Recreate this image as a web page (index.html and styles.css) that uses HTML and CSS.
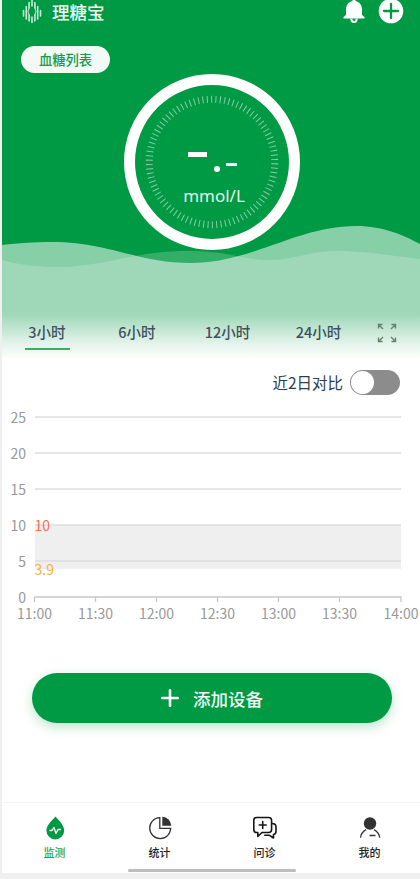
FILE: index.html
```html
<!DOCTYPE html>
<html lang="zh-CN">
<head>
<meta charset="utf-8">
<meta name="viewport" content="width=device-width, initial-scale=1">
<title>理糖宝</title>
<link rel="stylesheet" href="styles.css">
</head>
<body>
<div class="app">
  <section class="hero">
    <svg class="waves" viewBox="0 0 418 360" preserveAspectRatio="none" aria-hidden="true">
      <defs>
        <linearGradient id="fade" x1="0" y1="0" x2="0" y2="1">
          <stop offset="0" stop-color="#fff" stop-opacity="0"/>
          <stop offset=".3" stop-color="#fff" stop-opacity=".33"/>
          <stop offset=".65" stop-color="#fff" stop-opacity=".72"/>
          <stop offset="1" stop-color="#fff"/>
        </linearGradient>
      </defs>
      <path fill="#fff" fill-opacity=".53" d="M0 245C18 243 32 242 49 242C108 242 135 263 189 263C250 263 295 226 354 226C382 226 403 236 418 244V360H0Z"/>
      <path fill="#fff" fill-opacity=".2" d="M0 260C18 265 36 267 54 267C104 267 130 251 185 251C228 251 240 260 267 260C292 260 308 251 334 251C365 251 390 256 418 259V360H0Z"/>
      <path fill="url(#fade)" d="M0 314H418V360H0Z"/>
    </svg>
    <header class="topbar">
      <svg class="logo" viewBox="0 0 20 26" fill="none" stroke="#c9ebd7" stroke-width="1.6" stroke-linecap="round">
        <path d="M1.5 12.5V18M4.3 8.500V21M7.100 4.500V10M7.100 17V23M10 2V8M10 19V24.500M12.900 4.500V10M12.900 17V23M15.700 8.500V21M18.500 12.500V18"/>
        <path d="M7.100 10L6 13.500L7.100 17M12.900 10L14 13.500L12.900 17" stroke-width="1"/>
      </svg>
      <h1 class="brand">理糖宝</h1>
      <svg class="bell" viewBox="0 0 22 26" fill="#fff">
        <path d="M9.500 1H12.500V4C17 5 19 8.500 19 12.500V18L21.500 20V21.500H.5V20L3 18V12.500C3 8.500 5 5 9.500 4Z"/>
        <path d="M8.300 21.500C8.300 24 9.500 25 11 25S13.700 24 13.700 21.500" fill="none" stroke="#fff" stroke-width="2"/>
      </svg>
      <svg class="plus" viewBox="0 0 26 26"><circle cx="13" cy="13" r="12.300" fill="#fff"/><path d="M6 13H20M13 6V20" stroke="#009a44" stroke-width="2.300" stroke-linecap="round"/></svg>
    </header>
    <button class="list-btn">血糖列表</button>
    <div class="gauge">
      <svg class="ticks" viewBox="0 0 154 154" aria-hidden="true"><circle class="tick-ring" cx="77" cy="77" r="62.700" pathLength="900"/></svg>
      <div class="reading"><i class="dash-lg"></i><i class="dot"></i><i class="dash-sm"></i></div>
      <div class="unit">mmol/L</div>
    </div>
    <nav class="ranges">
      <a class="range active">3小时</a>
      <a class="range">6小时</a>
      <a class="range">12小时</a>
      <a class="range">24小时</a>
      <svg class="expand" viewBox="0 0 20 20" fill="none" stroke="#69806f" stroke-width="1.400">
        <path d="M1.500 5.500V1.500H5.500M1.500 1.500L6 6M14.500 1.500H18.500V5.500M18.500 1.500L14 6M1.500 14.500V18.500H5.500M1.500 18.500L6 14M14.500 18.500H18.500V14.500M18.500 18.500L14 14"/>
      </svg>
    </nav>
  </section>

  <div class="compare"><span>近2日对比</span><span class="switch"><i></i></span></div>

  <svg class="chart" viewBox="0 0 418 230">
    <path class="band" d="M33 125H399V169H33Z"/>
    <path class="grid" d="M33 17H399M33 53H399M33 89H399M33 125H399M33 161H399"/>
    <path class="axis" d="M32.500 197H399.500M32.500 197V202M93.500 197V202M154.500 197V202M215.500 197V202M276.500 197V202M337.500 197V202M399 197V202"/>
    <g class="y-labels">
      <text x="24" y="22.500">25</text><text x="24" y="58.500">20</text><text x="24" y="94.500">15</text>
      <text x="24" y="130.500">10</text><text x="24" y="166.500">5</text><text x="24" y="202.500">0</text>
    </g>
    <g class="x-labels">
      <text x="32.500" y="219">11:00</text><text x="93.500" y="219">11:30</text><text x="154.500" y="219">12:00</text>
      <text x="215.500" y="219">12:30</text><text x="276.500" y="219">13:00</text><text x="337.500" y="219">13:30</text><text x="399" y="219">14:00</text>
    </g>
    <text class="high" x="32.500" y="130.500">10</text>
    <text class="low" x="32.500" y="174.500">3.9</text>
  </svg>

  <button class="add-btn">
    <svg viewBox="0 0 18 18"><path d="M1.300 9H16.700M9 1.300V16.700" stroke="#fff" stroke-width="2.600" stroke-linecap="round"/></svg>
    <span>添加设备</span>
  </button>

  <nav class="tabs">
    <a class="tab on">
      <svg viewBox="0 0 24 24"><path fill="#009a44" d="M12.500 .5C15 3.500 21.200 9 21.200 14.500A8.900 8.900 0 0 1 3.400 14.500C3.400 9 10 3.500 12.500 .5Z"/><path d="M6.500 14.500H9L11 11.500L13 17.500L15 13.500H18" fill="none" stroke="#fff" stroke-width="1.300" stroke-linejoin="round"/></svg>
      <span>监测</span>
    </a>
    <a class="tab">
      <svg viewBox="0 0 24 24"><path d="M11.800 1.600A10.500 10.500 0 1 0 22.700 12.300H11.800Z" fill="none" stroke="#333" stroke-width="1.300"/><path fill="#333" d="M14.300 .8A9.500 9.500 0 0 1 23.300 9.800H14.300Z"/></svg>
      <span>统计</span>
    </a>
    <a class="tab">
      <svg viewBox="0 0 24 24" fill="none" stroke="#151515" stroke-width="1.600" stroke-linejoin="round" stroke-linecap="round"><path d="M3.600 1.500H15.600Q18.600 1.500 18.600 4.500V13.500Q18.600 16.500 15.600 16.500H9L4.800 20.500V16.500H3.600Q.8 16.500 .8 13.500V4.500Q.8 1.500 3.600 1.500ZM9.700 5.500V12.500M6.200 9H13.200"/><path d="M19 7.500Q23 7.500 23 11V15.500Q23 18 20.500 18.500V22L16.500 19.300H11.800"/></svg>
      <span>问诊</span>
    </a>
    <a class="tab">
      <svg viewBox="0 0 24 24"><circle cx="12" cy="7.500" r="6.200" fill="#333"/><path d="M2.500 21.800Q3 16.500 8 13.600M16 13.600Q21.200 16.500 21.700 21.800M11.500 19.500H17.500" fill="none" stroke="#333" stroke-width="1.300"/></svg>
      <span>我的</span>
    </a>
    <i class="home-bar"></i>
  </nav>
</div>
</body>
</html>
```

FILE: styles.css
```css
* { box-sizing: border-box; }

body {
  margin: 0;
  background: #f0f0f0;
  font-family: "Noto Sans CJK SC", "Noto Sans", sans-serif;
}

button {
  border: 0;
  padding: 0;
  font-family: inherit;
}

.app {
  display: flex;
  flex-direction: column;
  height: 873px;
  margin-left: 2px;
  background: #fff;
}

.hero {
  position: relative;
  display: flex;
  flex-direction: column;
  height: 360px;
  background: #009a44;
}

.waves {
  position: absolute;
  inset: 0;
  width: 100%;
  height: 100%;
}

.topbar {
  display: flex;
  align-items: center;
  height: 24px;
  padding: 0 16px 0 20px;
}

.logo { width: 20px; height: 26px; margin-top: -2px; }

.brand {
  flex: 1;
  margin: 0 0 0 10px;
  color: #eefaf2;
  font-size: 17.5px;
  font-weight: 500;
  line-height: 24px;
}

.bell { width: 22px; height: 26px; margin-top: -4px; }
.plus { width: 26px; height: 26px; margin: -2px 0 0 13px; }

.list-btn {
  width: 89px;
  height: 27px;
  margin: 22px 0 0 19px;
  border-radius: 14px;
  background: #f3faf6;
  color: #129c4f;
  font-size: 13.3px;
  font-weight: 500;
  line-height: 26px;
}

.gauge {
  position: relative;
  display: flex;
  flex-direction: column;
  align-items: center;
  flex: none;
  width: 176px;
  height: 176px;
  margin: 0.5px 0 0 122px;
  padding-top: 67px;
  border: 11px solid #fff;
  border-radius: 50%;
  background: #009a44;
}

.ticks {
  position: absolute;
  inset: 0;
  width: 154px;
  height: 154px;
}

.tick-ring {
  fill: none;
  stroke: #83cba2;
  stroke-width: 7;
  stroke-dasharray: 2.3 7.7;
  stroke-dashoffset: -3;
}

.reading {
  display: flex;
  align-items: flex-start;
  width: 49px;
  height: 20px;
}

.reading i { background: #fff; }
.dash-lg { width: 19px; height: 5px; }
.dot { width: 6px; height: 6px; margin: 14px 6px 0 7px; border-radius: 50%; }
.dash-sm { width: 11px; height: 3px; margin-top: 11px; }

.unit {
  margin: 12px 0 0 4px;
  color: #e3f5ea;
  font-family: "Noto Sans", sans-serif;
  font-size: 17px;
  line-height: 24px;
}

.ranges {
  position: relative;
  display: grid;
  grid-template-columns: 90px 90px 91px 91px 46px;
  margin-top: 68px;
}

.range {
  position: relative;
  color: #40505f;
  font-size: 14.5px;
  font-weight: 500;
  line-height: 28px;
  text-align: center;
}

.range.active::after {
  content: "";
  display: block;
  width: 45px;
  height: 2px;
  margin: 2px auto 0;
  background: #3bae65;
}

.expand { width: 20px; height: 20px; margin: 5px 0 0 13px; }

.compare {
  display: flex;
  align-items: center;
  justify-content: flex-end;
  gap: 7px;
  height: 44px;
  padding-right: 20px;
  color: #2c3e50;
  font-size: 15.5px;
}

.switch {
  width: 50px;
  height: 25px;
  padding: 1px;
  border-radius: 13px;
  background: #8c8c8c;
}

.switch i {
  display: block;
  width: 23px;
  height: 23px;
  border-radius: 50%;
  background: #fff;
}

.chart {
  flex: none;
  width: 418px;
  height: 230px;
  margin-top: -4px;
  font-size: 14px;
}

.band { fill: #efefef; }
.grid { stroke: #dedede; stroke-width: 1.5; }
.axis { fill: none; stroke: #c8c8c8; stroke-width: 1.3; }
.y-labels { fill: #999; text-anchor: end; }
.x-labels { fill: #999; text-anchor: middle; }
.high { fill: #f37152; }
.low { fill: #fbb03b; }

.add-btn {
  display: flex;
  align-items: center;
  justify-content: center;
  gap: 14px;
  flex: none;
  width: 360px;
  height: 50px;
  margin: 43px 0 0 30px;
  border-radius: 25px;
  background: #009a44;
  box-shadow: 0 4px 12px rgba(0, 154, 68, 0.27);
  color: #f2fbf5;
  font-size: 17.5px;
  font-weight: 500;
}

.add-btn svg { width: 18px; height: 18px; }

.tabs {
  position: relative;
  display: grid;
  grid-template-columns: repeat(4, 105px);
  height: 71px;
  margin-top: auto;
  border-top: 1px solid #f5f5f5;
}

.tab {
  display: flex;
  flex-direction: column;
  align-items: center;
  padding-top: 13px;
  color: #222;
  font-size: 11px;
  font-weight: 500;
  line-height: 16px;
}

.tab svg { width: 24px; height: 24px; margin-bottom: 4px; }
.tab.on { color: #20aa5c; }

.home-bar {
  position: absolute;
  left: 126px;
  bottom: 1px;
  width: 168px;
  height: 3px;
  border-radius: 2px;
  background: #bdbdbd;
}
```
